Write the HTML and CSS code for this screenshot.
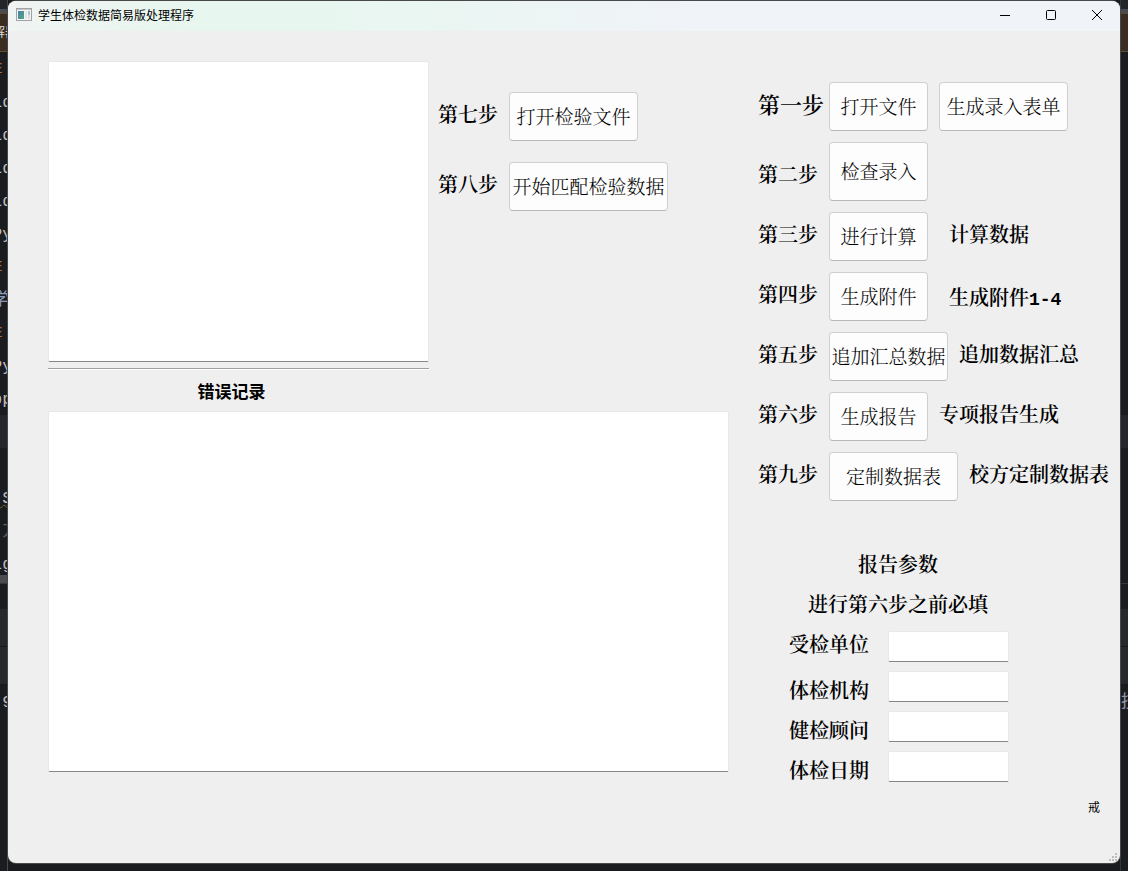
FILE: index.html
```html
<!DOCTYPE html>
<html lang="zh-CN">
<head>
<meta charset="utf-8">
<title>学生体检数据简易版处理程序</title>
<link rel="stylesheet" href="styles.css">
</head>
<body>
<div class="desktop">
  <div class="strip strip-left" aria-hidden="true">
    <div class="tab-top"></div>
    <div class="notice"><span>解器</span></div>
    <div class="code">
      <p class="key">E</p><p>ld</p><p>ld</p><p>ld</p><p>ld</p><p>Py</p>
      <p class="key">E</p><p class="cjk">学</p><p class="key">E</p><p>Py</p><p>pp</p>
    </div>
    <div class="band"></div>
    <div class="code code-end">
      <p class="key">:</p><p class="wavy">&nbsp;S</p><p class="dim">&nbsp;方</p><p>Lg</p>
    </div>
    <div class="scroll"></div>
    <div class="gap"></div>
    <div class="panel"></div>
    <div class="panel"></div>
    <div class="code"><p>&nbsp;9</p></div>
  </div>

  <div class="window">
    <header class="titlebar">
      <svg class="app-icon" viewBox="0 0 16 14" width="16" height="14" aria-hidden="true">
        <defs><linearGradient id="screen" x1="0" y1="0" x2="1" y2="1"><stop offset="0" stop-color="#4a7fb5"/><stop offset="1" stop-color="#4fa878"/></linearGradient></defs>
        <rect x=".5" y=".5" width="15" height="12" fill="#f5f5f5" stroke="#a0a3a6"/>
        <path d="M1 1.5h14" stroke="#c4c7ca"/>
        <rect x="2" y="3" width="6" height="8" fill="url(#screen)"/>
        <rect x="9" y="3" width="2" height="8" fill="#e2e4e6"/>
        <rect x="12" y="3" width="2" height="4" fill="#a9c5cf"/>
        <rect x="12" y="7" width="2" height="4" fill="#dcdfe1"/>
      </svg>
      <h1 class="title">学生体检数据简易版处理程序</h1>
      <div class="controls">
        <button type="button" aria-label="最小化"><svg viewBox="0 0 12 12" width="12" height="12"><path d="M1 6.5h10"/></svg></button>
        <button type="button" aria-label="最大化"><svg viewBox="0 0 12 12" width="12" height="12"><rect x="1.5" y="1.5" width="9" height="9" rx="1"/></svg></button>
        <button type="button" aria-label="关闭"><svg viewBox="0 0 12 12" width="12" height="12"><path d="M1 1l10 10M11 1L1 11"/></svg></button>
      </div>
    </header>

    <main class="content">
      <section class="left">
        <div class="upper">
          <textarea class="box box-upper" aria-label="处理信息"></textarea>
          <div class="match">
            <div class="step"><span class="step-name">第七步</span><button type="button" class="btn w-l">打开检验文件</button></div>
            <div class="step"><span class="step-name">第八步</span><button type="button" class="btn w-xl">开始匹配检验数据</button></div>
          </div>
        </div>
        <hr class="divider">
        <label class="log-label" for="log">错误记录</label>
        <textarea class="box box-log" id="log"></textarea>
      </section>

      <section class="right">
        <div class="steps">
          <div class="step"><span class="step-name large">第一步</span><button type="button" class="btn">打开文件</button><button type="button" class="btn w-l">生成录入表单</button></div>
          <div class="step"><span class="step-name low">第二步</span><button type="button" class="btn tall">检查录入</button></div>
          <div class="step"><span class="step-name">第三步</span><button type="button" class="btn">进行计算</button><span class="note inset">计算数据</span></div>
          <div class="step"><span class="step-name">第四步</span><button type="button" class="btn">生成附件</button><span class="note inset low">生成附件<span class="num">1-4</span></span></div>
          <div class="step"><span class="step-name">第五步</span><button type="button" class="btn w-m">追加汇总数据</button><span class="note">追加数据汇总</span></div>
          <div class="step"><span class="step-name">第六步</span><button type="button" class="btn">生成报告</button><span class="note">专项报告生成</span></div>
          <div class="step"><span class="step-name">第九步</span><button type="button" class="btn w-l">定制数据表</button><span class="note">校方定制数据表</span></div>
        </div>
        <form class="params">
          <h2>报告参数</h2>
          <p class="hint">进行第六步之前必填</p>
          <div class="field first"><label for="unit">受检单位</label><input id="unit" type="text"></div>
          <div class="field"><label for="org">体检机构</label><input id="org" type="text"></div>
          <div class="field"><label for="advisor">健检顾问</label><input id="advisor" type="text"></div>
          <div class="field"><label for="date">体检日期</label><input id="date" type="text"></div>
        </form>
        <span class="mark">戒</span>
      </section>
    </main>
    <svg class="grip" viewBox="0 0 8 8" width="8" height="8" aria-hidden="true"><path d="M6 0h2v2H6zM3 3h2v2H3zM6 3h2v2H6zM0 6h2v2H0zM3 6h2v2H3zM6 6h2v2H6z"/></svg>
  </div>

  <div class="strip strip-right" aria-hidden="true">
    <div class="tab-top"></div>
    <div class="notice"></div>
    <div class="blank-a"></div>
    <div class="band"></div>
    <div class="blank-b"></div>
    <div class="gap"></div>
    <div class="panel"></div>
    <div class="panel"></div>
    <div class="code code-right"><p>技</p></div>
  </div>
</div>
</body>
</html>
```
FILE: styles.css
```css
* { box-sizing: border-box; }

body {
  margin: 0;
  background: #1a1b1e;
  color: #000;
  font-family: "SimSun", "Noto Serif CJK SC", "Noto Sans CJK SC", serif;
}

h1, h2, p { margin: 0; }
button, input, textarea { font: inherit; color: inherit; }

.desktop {
  display: grid;
  grid-template-columns: 8px minmax(0, 1fr) 8px;
  min-height: 100vh;
}

/* Editor visible behind the window */
.strip { overflow: hidden; background: #1b1c1f; }
.strip-left { border-right: 1px solid #4a4b4d; }
.strip-right { border-left: 1px solid #33363a; }
.tab-top { height: 13px; background: linear-gradient(#242529 9px, #4a4c52 9px); }
.notice {
  height: 39px;
  border-top: 1px solid #5a4a2c;
  border-bottom: 1px solid #5f5030;
  background: #3b2e20;
  color: #d8d8d8;
  font: 13px/34px "Noto Sans CJK SC", sans-serif;
  white-space: nowrap;
}
.notice span { margin-left: -8px; }
.code {
  margin-left: -8px;
  color: #bcbec4;
  font-family: "Liberation Mono", "Noto Sans CJK SC", monospace;
  font-size: 17px;
  line-height: 35px;
  white-space: nowrap;
}
.code p { height: 33px; }
.code .key { margin-left: 2px; color: #b8693f; font-size: 14px; }
.code .cjk { color: #8a9bc0; }
.code .dim { color: #5d5f66; }
.code .wavy { text-decoration: underline wavy #7a6430 1px; }
.code-end { height: 127px; overflow: hidden; }
.code-right { margin-left: 0; color: #8f9ba8; }
.band { height: 33px; background: #25262b; }
.scroll { height: 8px; background: #4b4c4f; }
.gap { height: 26px; border-top: 1px solid #35363a; }
.panel { height: 38px; border-bottom: 1px solid #17181a; background: #26282b; }
.blank-a { height: 363px; }
.blank-b { height: 135px; }

/* Window */
.window {
  position: relative;
  display: flex;
  flex-direction: column;
  margin: 1px 0 8px;
  border-radius: 8px;
  background: #efefef;
  box-shadow: 0 0 0 1px #47484a;
  overflow: hidden;
}
.titlebar {
  display: flex;
  align-items: center;
  height: 30px;
  padding: 0 0 2px 8px;
  background: linear-gradient(90deg, #f0f4f2, #e7f6ef 18%, #e9f6f1 35%, #f0f3f8 62%, #f0f3f8);
}
.title {
  flex: 1;
  margin-left: 6px;
  font: 400 12px/18px "Noto Sans CJK SC", sans-serif;
}
.controls { display: flex; }
.controls button {
  display: grid;
  place-items: center;
  width: 46px;
  height: 28px;
  padding: 0;
  border: 0;
  background: none;
}
.controls svg { fill: none; stroke: #000; }

.content {
  flex: 1;
  display: grid;
  grid-template-columns: minmax(680px, 1fr) 352px;
  gap: 29px;
  padding: 30px 10px 0 40px;
}

.box, .field input {
  display: block;
  border: 1px solid #e8e8e8;
  border-bottom-color: #868686;
  border-radius: 2px;
  outline: 0;
  background: #fff;
  resize: none;
}
.upper { display: flex; gap: 9px; }
.box-upper { width: 381px; height: 301px; }
.box-log { width: 100%; height: 361px; }
.match { display: grid; align-content: start; gap: 21px; padding-top: 31px; }
.divider {
  width: 381px;
  margin: 6px 0 0;
  border: 0;
  border-top: 1px solid #a0a0a0;
  border-bottom: 1px solid #fff;
}
.log-label {
  display: block;
  width: 367px;
  padding: 9px 0 8px;
  font: 700 17px/24px "Noto Sans CJK SC", sans-serif;
  text-align: center;
}

/* Steps */
.steps { display: grid; gap: 11px; padding-top: 21px; }
.step { display: flex; align-items: center; white-space: nowrap; }
.step-name, .note {
  padding-bottom: 6px;
  font-size: 20px;
  font-weight: 600;
  line-height: 24px;
}
.step-name { width: 71px; flex: none; }
.step-name.large { font-size: 22px; }
.note { margin-left: 11px; }
.note.inset { margin-left: 21px; }
.step-name.low, .note.low { padding: 4px 0 0; }
.num { font-family: "Liberation Mono", monospace; font-size: 18px; }
.btn {
  flex: none;
  width: 99px;
  height: 49px;
  padding: 0 0 2px;
  border: 1px solid #d0d0d0;
  border-bottom-color: #b8b8b8;
  border-radius: 4px;
  background: #fdfdfd;
  font-size: 19px;
  font-weight: 300;
  line-height: 24px;
}
.btn + .btn { margin-left: 11px; }
.btn.w-m { width: 119px; }
.btn.w-l { width: 129px; }
.btn.w-xl { width: 159px; }
.btn.tall { height: 59px; }

/* Report parameters */
.params {
  display: grid;
  width: 280px;
  padding-top: 43px;
  font-size: 20px;
  font-weight: 600;
}
.params h2, .hint {
  height: 40px;
  font-size: 20px;
  font-weight: 600;
  line-height: 40px;
  text-align: center;
}
.field { display: flex; height: 40px; padding-left: 31px; }
.field label { flex: none; width: 99px; padding-top: 14px; line-height: 24px; }
.field.first label { padding-top: 8px; }
.field input { width: 121px; height: 31px; margin-top: 7px; padding: 0 4px; }
.mark {
  display: block;
  padding: 14px 10px 0 0;
  font: 12px/18px "Noto Sans CJK SC", sans-serif;
  text-align: right;
}

.grip { position: absolute; right: 3px; bottom: 2px; fill: #bdbdbd; }
```
